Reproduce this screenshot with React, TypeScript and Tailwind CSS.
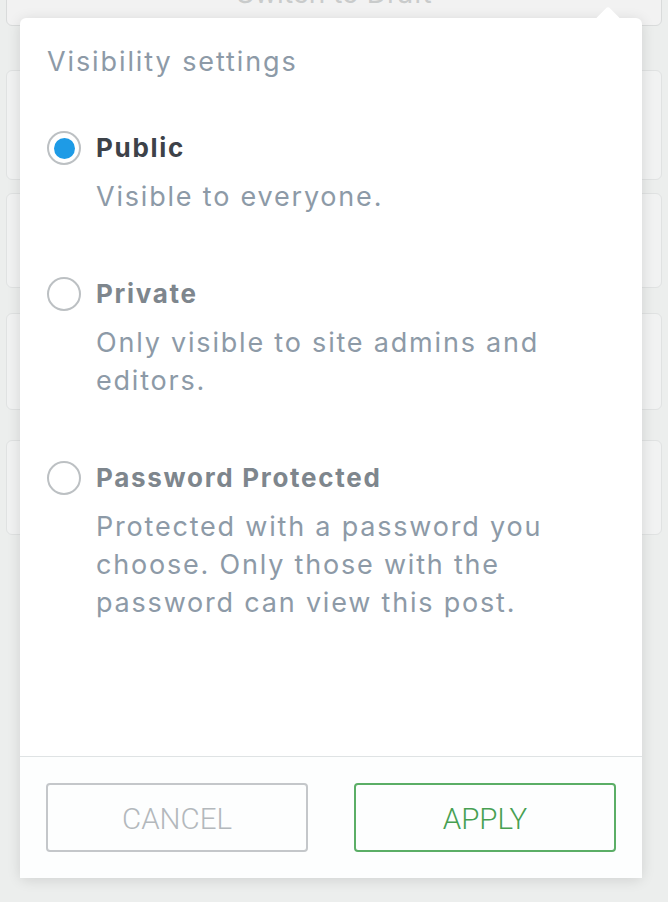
import { useState } from "react";

type Option = {
  id: string;
  label: string;
  description: string;
};

const options: Option[] = [
  { id: "public", label: "Public", description: "Visible to everyone." },
  {
    id: "private",
    label: "Private",
    description: "Only visible to site admins and editors.",
  },
  {
    id: "password",
    label: "Password Protected",
    description:
      "Protected with a password you choose. Only those with the password can view this post.",
  },
];

export default function App() {
  const [visibility, setVisibility] = useState("public");

  return (
    <main
      className="relative h-[902px] w-[668px] overflow-hidden bg-[#eceeed]"
      style={{ fontFamily: "Inter, 'Noto Sans', sans-serif" }}
    >
      {/* page behind the popover */}
      <div className="flex flex-col px-[6px]">
        <div className="-mt-[40px] flex h-[66px] items-center justify-center rounded-md border border-[#d9dbdb] bg-[#f2f2f2] px-2">
          <span className="text-[28px] text-[#c9cbcb]">Switch to Draft</span>
        </div>
        <div className="mt-[44px] h-[110px] rounded-md border border-[#e0e2e2] bg-[#f1f2f2]" />
        <div className="mt-[13px] h-[95px] rounded-md border border-[#e0e2e2] bg-[#f1f2f2]" />
        <div className="mt-[25px] h-[97px] rounded-md border border-[#e0e2e2] bg-[#f1f2f2]" />
        <div className="mt-[30px] h-[95px] rounded-md border border-[#e0e2e2] bg-[#f1f2f2]" />
      </div>

      {/* popover */}
      <div className="absolute left-[20px] top-[18px] flex h-[860px] w-[622px] flex-col rounded-md bg-white shadow-[0_2px_14px_rgba(0,0,0,0.12)]">
        <div className="absolute -top-[7px] left-[577px] h-[22px] w-[22px] rotate-45 rounded-[2px] bg-white" />

        <div className="relative flex-1 px-[27px] pt-[27px]">
          <h2 className="text-[27px] leading-[34px] tracking-[1.9px] text-[#8d9aa7]">
            Visibility settings
          </h2>

          <div className="mt-[51px] flex flex-col gap-[60px]">
            {options.map((option) => {
              const checked = visibility === option.id;
              return (
                <label
                  key={option.id}
                  className="flex cursor-pointer items-start gap-[15px]"
                  onClick={() => setVisibility(option.id)}
                >
                  <span className="mt-px flex h-[34px] w-[34px] shrink-0 items-center justify-center rounded-full border-2 border-[#bcc0c3] bg-white">
                    {checked && (
                      <span className="h-[21px] w-[21px] rounded-full bg-[#1e9be6]" />
                    )}
                  </span>
                  <span className="flex max-w-[519px] flex-col">
                    <span
                      className={
                        checked
                          ? "text-[26px] font-bold leading-[36px] tracking-[1.7px] text-[#3d4249]"
                          : "text-[26px] font-bold leading-[36px] tracking-[1.7px] text-[#7e868d]"
                      }
                    >
                      {option.label}
                    </span>
                    <span className="mt-[12px] text-[27px] leading-[38px] tracking-[1.8px] text-[#8d9aa7]">
                      {option.description}
                    </span>
                  </span>
                </label>
              );
            })}
          </div>
        </div>

        <div className="border-t border-[#dfe3e4] bg-[#fdfefe] px-[26px] pb-[26px] pt-[26px]">
          <div className="flex justify-between">
            <button
              type="button"
              className="h-[69px] w-[262px] rounded-[4px] border-2 border-[#c4c7ca] pt-[4px] text-[29.5px] font-light text-[#b3b8bc]"
              style={{ fontFamily: "Roboto, sans-serif" }}
            >
              CANCEL
            </button>
            <button
              type="button"
              className="h-[69px] w-[262px] rounded-[4px] border-2 border-[#5bae66] pt-[4px] text-[29.5px] font-light text-[#47a052]"
              style={{ fontFamily: "Roboto, sans-serif" }}
            >
              APPLY
            </button>
          </div>
        </div>
      </div>
    </main>
  );
}
